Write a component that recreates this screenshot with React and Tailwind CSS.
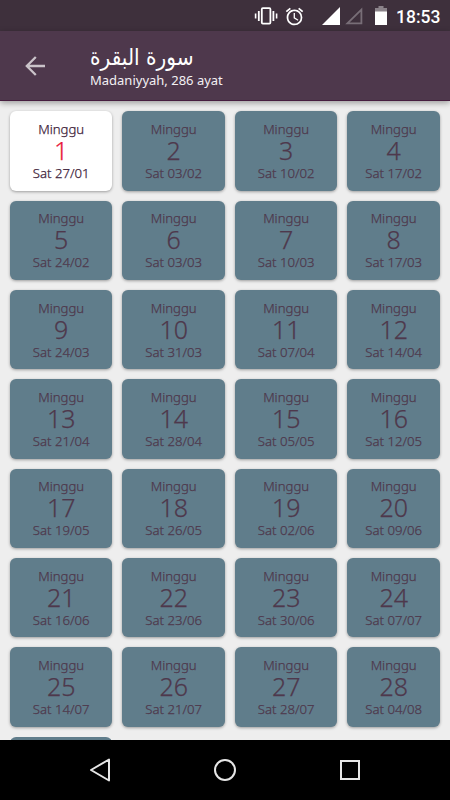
import { MdAlarm } from 'react-icons/md'

// Weekly schedule of a surah, one card per week
const WEEKS = 28
const FIRST_DAY = Date.UTC(2018, 0, 27)
const WEEK_MS = 7 * 24 * 60 * 60 * 1000

const weeks = Array.from({ length: WEEKS }, (_, i) => {
    const d = new Date(FIRST_DAY + i * WEEK_MS)
    const day = String(d.getUTCDate()).padStart(2, '0')
    const month = String(d.getUTCMonth() + 1).padStart(2, '0')
    return { number: i + 1, date: `Sat ${day}/${month}` }
})

function StatusBar() {
    return (
        <div className="flex h-[31px] shrink-0 items-center justify-end bg-[#3e303c] text-white">
            {/* vibrate */}
            <svg width="24" height="20" viewBox="0 0 24 20" fill="none" stroke="white" className="mr-[6px] mt-px">
                <rect x="7.8" y="2.2" width="8.6" height="15.4" rx="1" strokeWidth="1.8" />
                <path d="M4.8 5v10M19.4 5v10" strokeWidth="1.8" />
                <path d="M1.6 7.5v5M22.6 7.5v5" strokeWidth="1.6" />
            </svg>
            <MdAlarm size={21} className="mr-[17px] mt-px" />
            {/* signal, sim 1 and sim 2 */}
            <svg width="18" height="18" viewBox="0 0 18 18" className="mr-[5px]">
                <path d="M18 0v18H0z" fill="white" />
            </svg>
            <svg width="18" height="18" viewBox="0 0 18 18" className="mr-[12px]">
                <path d="M16.4 2.6v13.8H2.4z" fill="none" stroke="#786e77" strokeWidth="1.8" />
            </svg>
            {/* battery */}
            <svg width="12" height="19" viewBox="0 0 12 19" className="mr-[9px]">
                <path d="M0 2h3.5V0h5v2H12v5H0z" fill="#8b838a" />
                <path d="M0 5.5h12V19H0z" fill="white" />
            </svg>
            <span className="mr-[10px] mt-[2px] w-[44px] whitespace-nowrap font-['Roboto',sans-serif] text-[17.5px] font-medium leading-5">18:53</span>
        </div>
    )
}

function Header() {
    return (
        <div className="z-10 flex h-[70px] shrink-0 items-center border-b border-[#461d3f] bg-[#4e384c] shadow-[0_2px_6px_rgba(0,0,0,0.35)]">
            <svg width="20" height="20" viewBox="0 0 20 20" fill="none" stroke="#cac3c9" strokeWidth="2.3" className="ml-[25px] mr-[45px]">
                <path d="M20 10H2M10.8 1L1.8 10l9 9" />
            </svg>
            <div className="flex flex-col items-start text-white">
                <h1 dir="rtl" className="origin-left scale-x-[0.875] whitespace-nowrap font-['DejaVu_Sans',sans-serif] text-[23px] leading-[28px]">سورة البقرة</h1>
                <p className="whitespace-nowrap font-['Noto_Sans',sans-serif] text-[13px] leading-[18px] text-[#f3f0f3]">Madaniyyah, 286 ayat</p>
            </div>
        </div>
    )
}

function WeekCard({ number, date, active }) {
    return (
        <div
            className={`flex h-[79.35px] flex-col items-center rounded-[6px] pt-[9.5px] font-['Noto_Sans',sans-serif] text-[13.2px] font-light [-webkit-text-stroke:0.25px] shadow-[0_1px_3px_rgba(0,0,0,0.35)] ${
                active ? 'bg-white text-[#3c2038]' : 'bg-[#607d8b] text-[#4e384c]'
            }`}
        >
            <span className="leading-[17px]">Minggu</span>
            <span className={`text-[25px] leading-[25px] ${active ? 'text-[#e8183c]' : ''}`}>{number}</span>
            <span className="mt-[2px] leading-[17px]">{date}</span>
        </div>
    )
}

function NavBar() {
    return (
        <div className="z-10 flex h-[60px] shrink-0 items-center justify-center gap-[101px] bg-black">
            <svg width="24" height="24" viewBox="0 0 24 24" fill="none" stroke="#e6e6e6" strokeWidth="2">
                <path d="M21 1.5v21L3 12z" strokeLinejoin="round" />
            </svg>
            <svg width="24" height="24" viewBox="0 0 24 24" fill="none" stroke="#e6e6e6" strokeWidth="2">
                <circle cx="12" cy="12" r="10" />
            </svg>
            <svg width="24" height="24" viewBox="0 0 24 24" fill="none" stroke="#e6e6e6" strokeWidth="2">
                <rect x="3" y="3" width="18" height="18" />
            </svg>
        </div>
    )
}

function App() {
    return (
        <div className="flex h-[800px] w-[450px] flex-col overflow-hidden bg-[#eeeeee]">
            <StatusBar />
            <Header />
            <div className="min-h-0 flex-1 overflow-hidden pl-[10px] pt-[10.4px]">
                <div className="grid grid-cols-[102.4px_102.6px_102.4px_92.6px] gap-[10px]">
                    {weeks.map((week) => (
                        <WeekCard key={week.number} number={week.number} date={week.date} active={week.number === 1} />
                    ))}
                    {/* top of the next row, still empty */}
                    <div className="h-[79.35px] rounded-[6px] bg-[#607d8b]" />
                </div>
            </div>
            <NavBar />
        </div>
    )
}

export default App
